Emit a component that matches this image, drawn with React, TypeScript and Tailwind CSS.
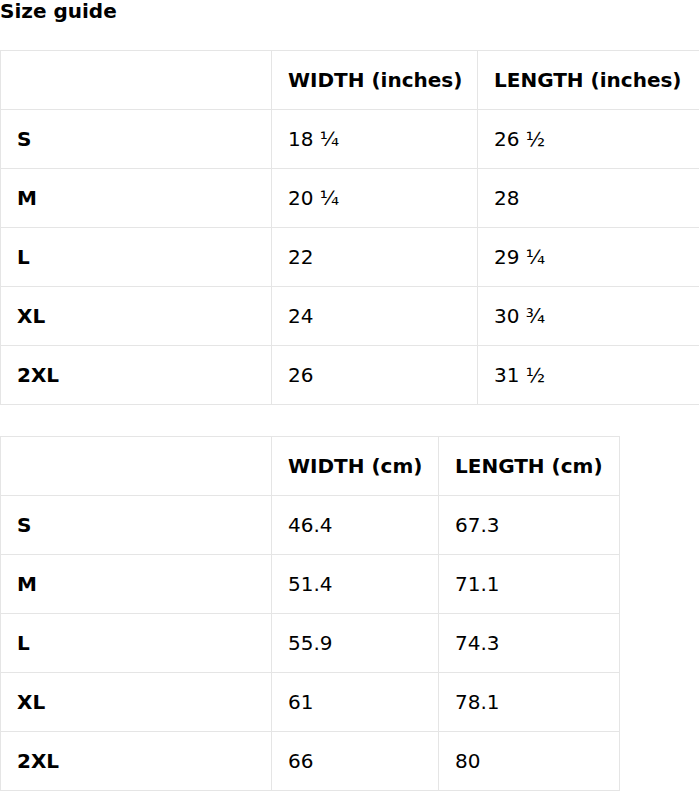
const inches = [
  ['S', '18 ¼', '26 ½'],
  ['M', '20 ¼', '28'],
  ['L', '22', '29 ¼'],
  ['XL', '24', '30 ¾'],
  ['2XL', '26', '31 ½'],
];

const cm = [
  ['S', '46.4', '67.3'],
  ['M', '51.4', '71.1'],
  ['L', '55.9', '74.3'],
  ['XL', '61', '78.1'],
  ['2XL', '66', '80'],
];

const cell = 'border border-[#e5e5e5] px-4 py-[17px] leading-[24px] text-left align-middle';

function SizeTable({ heads, rows, widths, className }: { heads: string[]; rows: string[][]; widths: string[]; className: string }) {
  return (
    <table className={`border-collapse table-fixed ${className}`}>
      <colgroup>
        {widths.map((w, i) => (
          <col key={i} className={w} />
        ))}
      </colgroup>
      <thead>
        <tr>
          <th className={cell}></th>
          {heads.map((h) => (
            <th key={h} className={`${cell} font-bold whitespace-nowrap`}>{h}</th>
          ))}
        </tr>
      </thead>
      <tbody>
        {rows.map((r) => (
          <tr key={r[0]}>
            <td className={`${cell} font-bold`}>{r[0]}</td>
            <td className={`${cell} font-normal`}>{r[1]}</td>
            <td className={`${cell} font-normal`}>{r[2]}</td>
          </tr>
        ))}
      </tbody>
    </table>
  );
}

export default function App() {
  return (
    <div className="min-h-screen bg-white text-black text-[20px]" style={{ fontFamily: '"DejaVu Sans", sans-serif' }}>
      <h2 className="font-bold text-[20px] leading-[20px] pt-px">Size guide</h2>
      <div className="mt-[29px] flex flex-col gap-[31px]">
        <SizeTable
          heads={['WIDTH (inches)', 'LENGTH (inches)']}
          rows={inches}
          widths={['w-[271px]', 'w-[206px]', 'w-[222px]']}
          className="w-[699px]"
        />
        <SizeTable
          heads={['WIDTH (cm)', 'LENGTH (cm)']}
          rows={cm}
          widths={['w-[271px]', 'w-[167px]', 'w-[181px]']}
          className="w-[619px]"
        />
      </div>
    </div>
  );
}
